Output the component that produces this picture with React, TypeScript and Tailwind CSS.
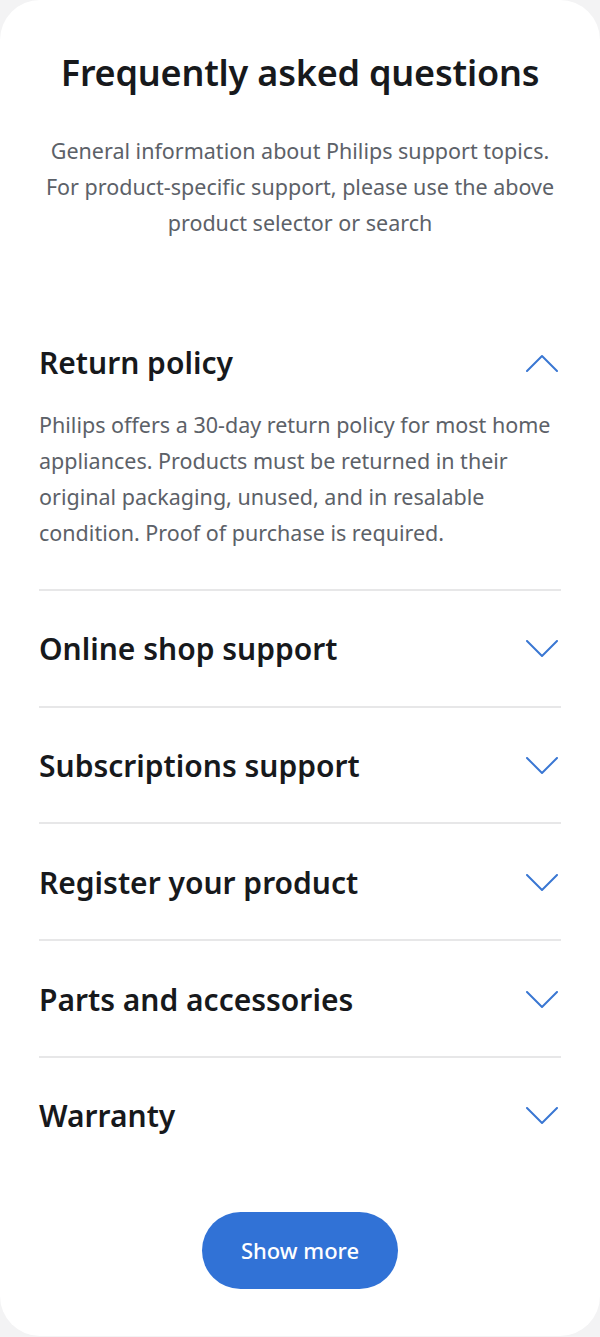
import React from "react";

const faqs = [
    {
        q: "Return policy",
        a: "Philips offers a 30-day return policy for most home appliances. Products must be returned in their original packaging, unused, and in resalable condition. Proof of purchase is required.",
        open: true,
    },
    { q: "Online shop support" },
    { q: "Subscriptions support" },
    { q: "Register your product" },
    { q: "Parts and accessories" },
    { q: "Warranty" },
];

function Chevron({ up }: { up?: boolean }) {
    return (
        <svg width="32" height="18" viewBox="0 0 32 18" fill="none" className="shrink-0 mr-[3px]">
            <path
                d={up ? "M1 17 L16 2 L31 17" : "M1 1 L16 16 L31 1"}
                stroke="#3a77d3"
                strokeWidth="2"
                strokeLinecap="round"
                strokeLinejoin="round"
            />
        </svg>
    );
}

export default function App() {
    return (
        <div className="min-h-screen bg-[#f3f3f4] font-['Noto_Sans',sans-serif]">
            <div className="bg-white rounded-[40px] px-[39px] pt-[51px] pb-[47px]">
                <h1 className="text-center text-[36px] leading-[44px] font-semibold text-[#17191c] tracking-[-0.2px]">
                    Frequently asked questions
                </h1>
                <p className="mt-[38px] text-center text-[21.5px] leading-[36px] text-[#5c6168]">
                    General information about Philips support topics. For product-specific support, please use the above product selector or search
                </p>

                <div className="mt-[63px]">
                    {faqs.map((f, i) => (
                        <div key={f.q} className={i < faqs.length - 1 ? "border-b-2 border-[#e7e7e8]" : ""}>
                            <div className="flex items-center justify-between pt-[40.5px] pb-[38.3px]">
                                <h3 className="text-[30px] leading-[36px] font-semibold text-[#17191c]">{f.q}</h3>
                                <Chevron up={f.open} />
                            </div>
                            {f.open && (
                                <p className="-mt-[12px] pb-[38px] text-[21.5px] leading-[36px] text-[#5c6168]">
                                    {f.a}
                                </p>
                            )}
                        </div>
                    ))}
                </div>

                <div className="mt-[39px] flex justify-center">
                    <button className="w-[196px] h-[77px] rounded-full bg-[#3172d6] text-white text-[22px] font-medium">
                        Show more
                    </button>
                </div>
            </div>
        </div>
    );
}
